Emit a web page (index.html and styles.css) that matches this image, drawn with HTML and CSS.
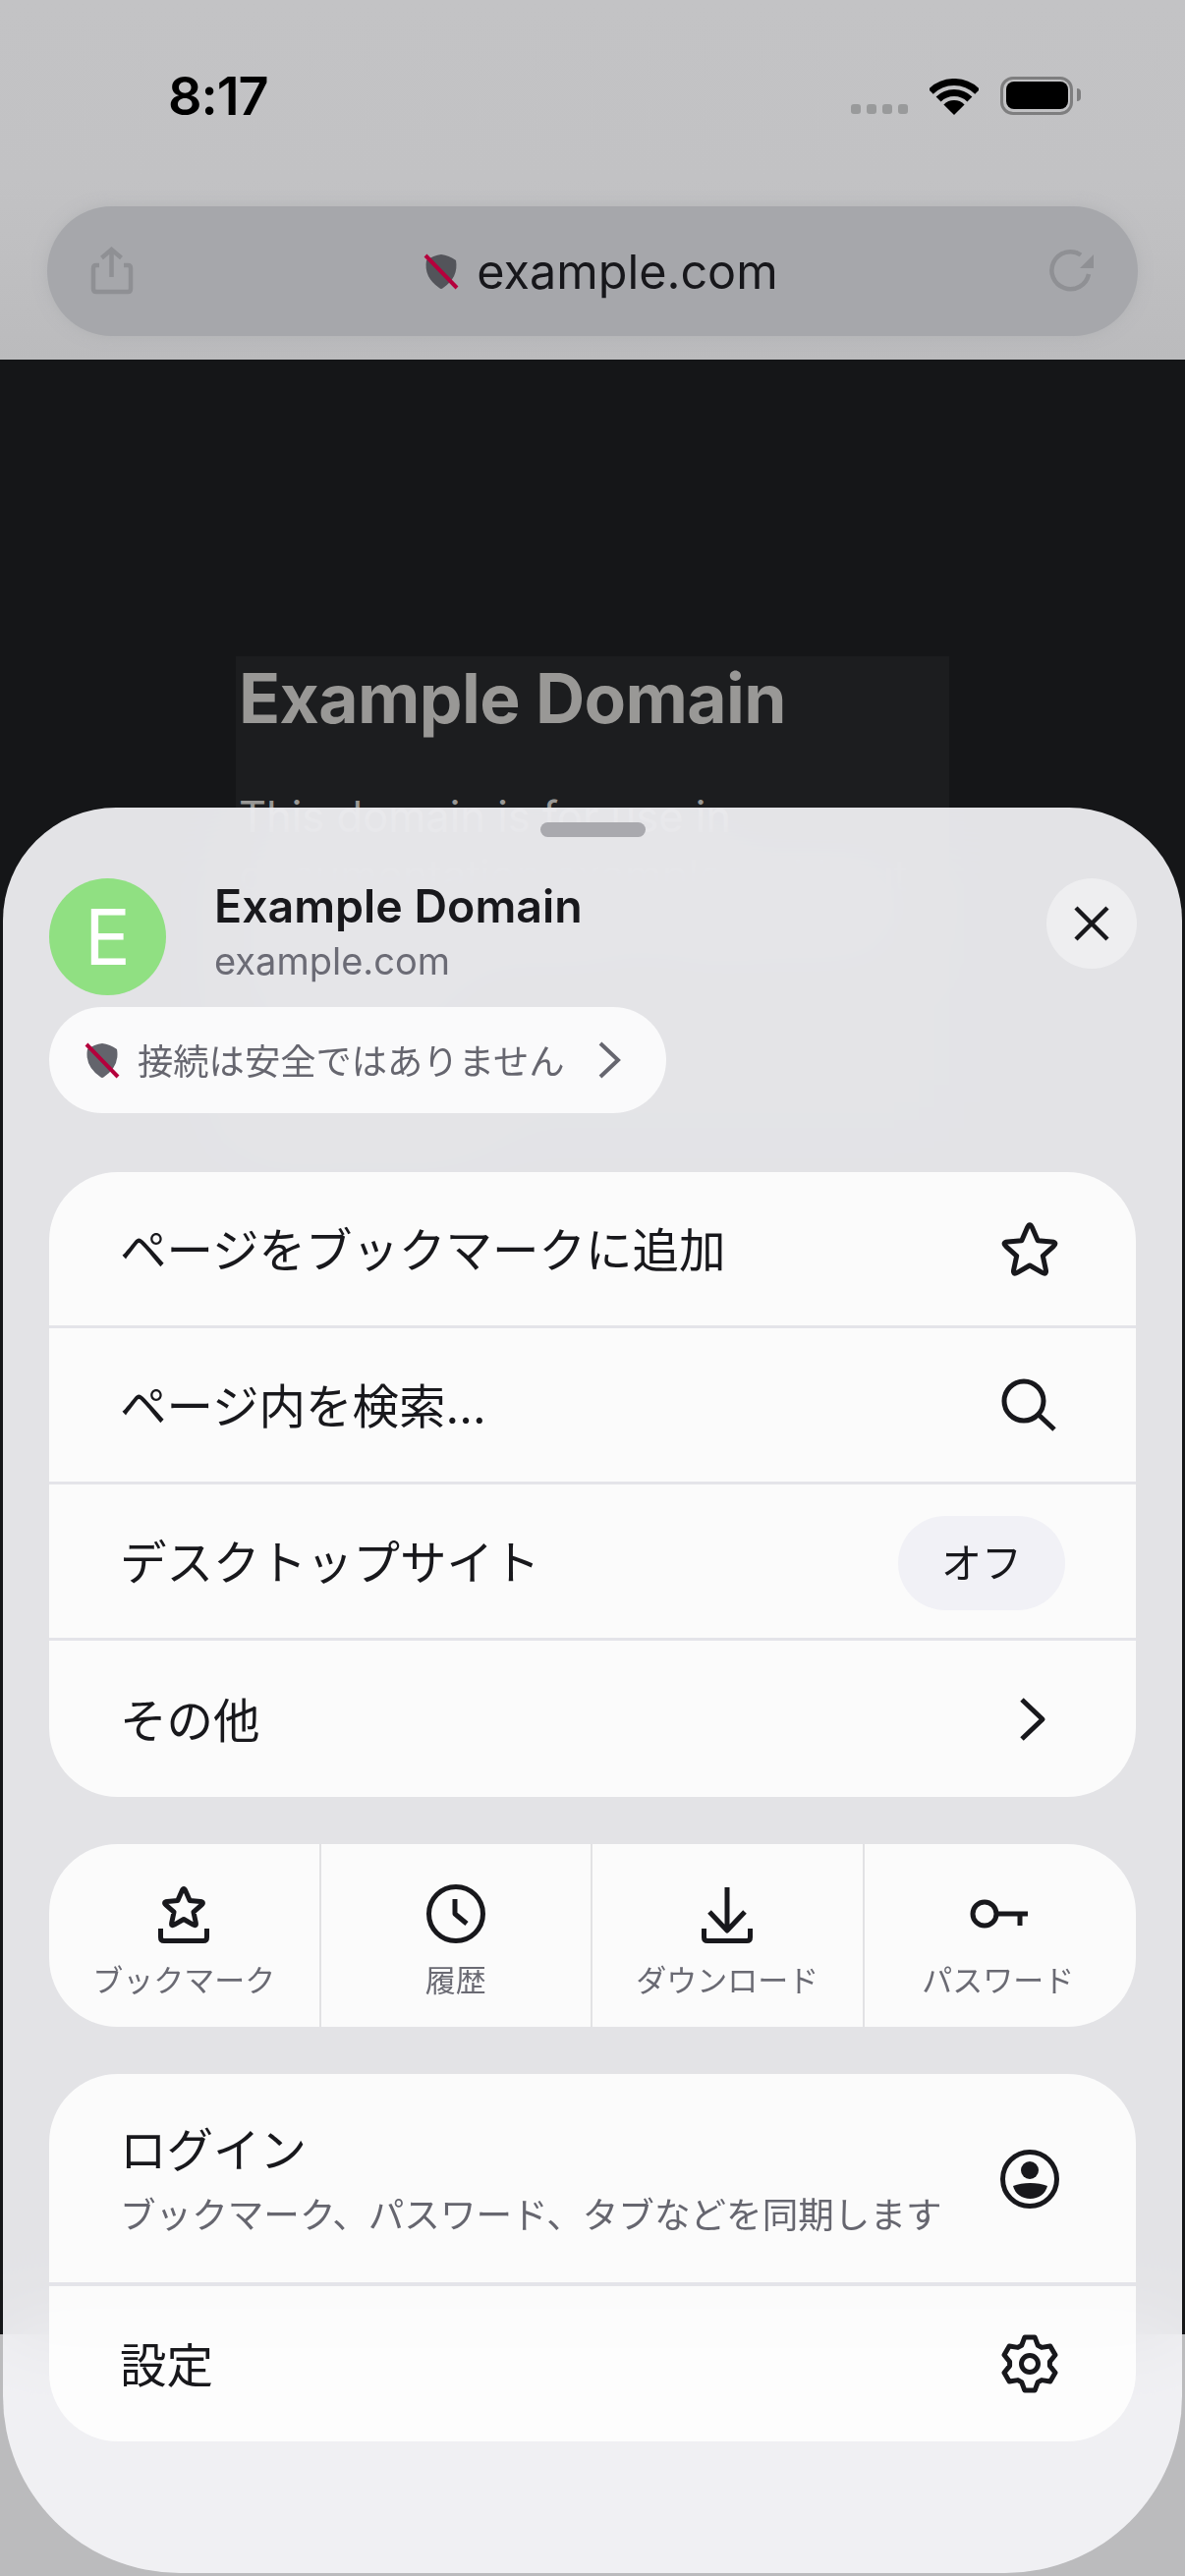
FILE: index.html
```html
<!DOCTYPE html>
<html lang="ja">
<head>
    <meta charset="UTF-8">
    <meta name="viewport" content="width=device-width, initial-scale=1.0">
    <title>Example Domain</title>
    <link rel="stylesheet" href="styles.css">
</head>
<body>
    <div class="chrome">
        <div class="status-bar">
            <span class="clock">8:17</span>
            <div class="status-icons">
                <div class="signal"><i></i><i></i><i></i><i></i></div>
                <svg class="wifi" width="50" height="37" viewBox="0 0 50 37">
                    <path d="M1.3 13.3A33.5 33.5 0 0 1 48.7 13.3" fill="none" stroke="#000" stroke-width="7"/>
                    <path d="M9.1 21.1A22.5 22.5 0 0 1 40.9 21.1" fill="none" stroke="#000" stroke-width="7"/>
                    <path d="M25 37L14.4 26.4A15 15 0 0 1 35.6 26.4Z"/>
                </svg>
                <div class="battery"><div class="battery-level"></div></div>
            </div>
        </div>
        <div class="url-bar">
            <svg class="dim-icon" width="44" height="48" viewBox="0 0 44 48">
                <path d="M9 18H6Q3 18 3 21V42Q3 45 6 45H38Q41 45 41 42V21Q41 18 38 18H34M21.5 30V3M11.5 10.5L21.5 2L31.5 10.5"/>
            </svg>
            <div class="url">
                <svg width="36" height="38" viewBox="0 0 36 38">
                    <path d="M18 2Q26 3 33 8Q36 25 20 36Q18 38 16 36Q0 25 3 8Q10 3 18 2Z" fill="#53545a"/>
                    <path d="M2 3L34 36" stroke="#b5003c" stroke-width="4"/>
                </svg>
                <span>example.com</span>
            </div>
            <svg class="dim-icon" width="44" height="44" viewBox="0 0 44 44">
                <path d="M31 5.5A19 19 0 1 0 39 25"/>
                <path d="M44 5V19H30Z" fill="#8f9094" stroke="none"/>
            </svg>
        </div>
    </div>

    <div class="page">
        <div class="page-box">
            <h1>Example Domain</h1>
            <p>This domain is for use in documentation examples without needing permission. Avoid use in operations.</p>
            <p>Learn more</p>
        </div>
    </div>

    <div class="sheet">
        <div class="handle"></div>
        <div class="site-head">
            <div class="avatar">E</div>
            <div class="site-info">
                <div class="site-title">Example Domain</div>
                <div class="site-url">example.com</div>
            </div>
            <button class="close">
                <svg class="line-icon" width="36" height="36" viewBox="0 0 36 36">
                    <path d="M2 2L34 34M34 2L2 34"/>
                </svg>
            </button>
        </div>
        <div class="secure-pill">
            <svg width="36" height="38" viewBox="0 0 36 38">
                <path d="M18 2Q26 3 33 8Q36 25 20 36Q18 38 16 36Q0 25 3 8Q10 3 18 2Z" fill="#63646c"/>
                <path d="M2 3L34 36" stroke="#b5003c" stroke-width="4"/>
            </svg>
            <span>接続は安全ではありません</span>
            <svg class="pill-chevron" width="24" height="38" viewBox="0 0 24 38">
                <path d="M3 2L21 19L3 36"/>
            </svg>
        </div>

        <div class="card">
            <div class="row">
                <span>ページをブックマークに追加</span>
                <svg class="line-icon icon-star" width="66" height="66" viewBox="-3 -3 66 66">
                    <path d="M27.5 7.6Q30 2 32.5 7.6L38.2 20.7L52.4 22.1Q58.5 22.7 53.9 26.8L43.3 36.3L46.3 50.3Q47.6 56.3 42.3 53.2L30 46L17.7 53.2Q12.4 56.3 13.7 50.3L16.7 36.3L6.1 26.8Q1.5 22.7 7.6 22.1L21.8 20.7Z"/>
                </svg>
            </div>
            <div class="row">
                <span>ページ内を検索...</span>
                <svg class="line-icon" width="60" height="60" viewBox="0 -2 60 60">
                    <circle cx="24" cy="24" r="20"/>
                    <path d="M39 38L55 53"/>
                </svg>
            </div>
            <div class="row">
                <span>デスクトップサイト</span>
                <span class="badge">オフ</span>
            </div>
            <div class="row">
                <span>その他</span>
                <svg class="line-icon" width="60" height="60" viewBox="0 0 60 60">
                    <path d="M22 10L43 30L22 50"/>
                </svg>
            </div>
        </div>

        <div class="quick-card">
            <div class="quick-item">
                <svg class="line-icon" width="60" height="60" viewBox="0 0 60 60">
                    <path transform="translate(7.5 1) scale(.75)" stroke-width="6.67" d="M27.5 7.6Q30 2 32.5 7.6L38.2 20.7L52.4 22.1Q58.5 22.7 53.9 26.8L43.3 36.3L46.3 50.3Q47.6 56.3 42.3 53.2L30 46L17.7 53.2Q12.4 56.3 13.7 50.3L16.7 36.3L6.1 26.8Q1.5 22.7 7.6 22.1L21.8 20.7Z"/>
                    <path d="M6.5 45V54Q6.5 57.5 10 57.5H50Q53.5 57.5 53.5 54V45"/>
                </svg>
                <span>ブックマーク</span>
            </div>
            <div class="quick-item">
                <svg class="line-icon" width="60" height="60" viewBox="0 0 60 60">
                    <circle cx="30" cy="30" r="27.5"/>
                    <path d="M29 15V30L41 40"/>
                </svg>
                <span>履歴</span>
            </div>
            <div class="quick-item">
                <svg class="line-icon" width="60" height="60" viewBox="0 0 60 60">
                    <path d="M30 3V47M12 28L30 47L48 28M6.5 45V54Q6.5 57.5 10 57.5H50Q53.5 57.5 53.5 54V45"/>
                </svg>
                <span>ダウンロード</span>
            </div>
            <div class="quick-item">
                <svg class="line-icon" width="60" height="60" viewBox="0 0 60 60">
                    <circle cx="16" cy="30" r="12"/>
                    <path d="M28 30H60M52 30V42"/>
                </svg>
                <span>パスワード</span>
            </div>
        </div>

        <div class="card">
            <div class="row row-login">
                <div>
                    <div>ログイン</div>
                    <div class="row-sub">ブックマーク、パスワード、タブなどを同期します</div>
                </div>
                <svg class="line-icon" width="60" height="60" viewBox="0 0 60 60">
                    <circle cx="30" cy="30" r="27.5"/>
                    <circle cx="30" cy="21" r="9" fill="#18181c" stroke="none"/>
                    <path d="M13 37C18 35 24 34 30.5 34C37 34 43 35 48 37C46 45 39 50 30.5 50C22 50 15 45 13 37Z" fill="#18181c" stroke="none"/>
                </svg>
            </div>
            <div class="row">
                <span>設定</span>
                <svg class="line-icon" width="60" height="60" viewBox="0 0 60 60">
                    <path d="M21.7 11.3L24.8 3H35.2L38.3 11.3L42.1 13.4L50.8 12L56 21L50.4 27.9V32.1L56 39L50.8 48L42.1 46.6L38.3 48.7L35.2 57H24.8L21.7 48.7L17.9 46.6L9.2 48L4 39L9.6 32.1V27.9L4 21L9.2 12L17.9 13.4Z"/>
                    <circle cx="30" cy="30" r="8.5"/>
                </svg>
            </div>
        </div>
    </div>
</body>
</html>
```

FILE: styles.css
```css
* {
    box-sizing: border-box;
}
html, body {
    margin: 0;
    height: 2622px;
}
body {
    position: relative;
    overflow: hidden;
    background: #bbbbbd;
    font-family: Inter, "Noto Sans CJK JP", sans-serif;
    color: #18181c;
}

/* browser chrome */
.chrome {
    height: 366px;
    background: linear-gradient(#c3c3c5, #c2c2c4 50%, #bbbbbd);
}
.status-bar {
    display: flex;
    align-items: center;
    justify-content: space-between;
    height: 194px;
    padding: 0 114px 0 171px;
}
.clock {
    font-size: 54px;
    font-weight: 600;
    color: #000;
    letter-spacing: -1px;
}
.status-icons {
    display: flex;
    align-items: flex-end;
    gap: 22px;
}
.signal {
    display: flex;
    gap: 6px;
    margin-bottom: 1px;
}
.signal i {
    width: 10px;
    height: 10px;
    border-radius: 3px;
    background: #999a9b;
}
.battery {
    position: relative;
    width: 74px;
    height: 39px;
    padding: 2.5px;
    border: 3.5px solid #7e7e7f;
    border-radius: 13px;
}
.battery::after {
    content: "";
    position: absolute;
    top: 9px;
    right: -11px;
    width: 4px;
    height: 13px;
    border-radius: 0 4px 4px 0;
    background: #7e7e7f;
}
.battery-level {
    height: 100%;
    border-radius: 8px;
    background: #000;
}
.url-bar {
    display: flex;
    align-items: center;
    justify-content: space-between;
    height: 132px;
    margin: 16px 48px 0;
    padding: 0 45px 0 44px;
    border-radius: 66px;
    background: #a6a7ab;
    box-shadow: 0 0 14px rgba(166, 167, 171, 0.5);
}
.dim-icon {
    overflow: visible;
    fill: none;
    stroke: #8f9094;
    stroke-width: 4.5;
}
.url {
    display: flex;
    align-items: center;
    gap: 18px;
    margin-left: 18px;
    font-size: 48.5px;
    color: #17171b;
}

/* the page behind the sheet */
.page {
    height: 2010px;
    padding: 302px 0 0 240px;
    background: #151618;
}
.page-box {
    width: 726px;
    height: 480px;
    padding: 0 3px;
    background: #1c1d1f;
    color: #999896;
}
.page-box h1 {
    margin: 0;
    padding-top: 3px;
    font-size: 69.5px;
    font-weight: 700;
    line-height: 80px;
    letter-spacing: -0.6px;
}
.page-box p {
    margin: 50px 0 0;
    font-size: 43.5px;
    line-height: 60px;
}

/* bottom sheet */
.sheet {
    position: absolute;
    top: 822px;
    left: 3px;
    right: 3px;
    bottom: 3px;
    padding: 15px 47px 0;
    border-radius: 115px 115px 180px 180px;
    background: rgba(244, 244, 247, 0.927);
    backdrop-filter: blur(40px);
}
.handle {
    width: 107px;
    height: 15px;
    margin: 0 auto;
    border-radius: 8px;
    background: #a9a9ae;
}
.site-head {
    display: flex;
    align-items: flex-start;
    margin-top: 42px;
}
.avatar {
    display: flex;
    align-items: center;
    justify-content: center;
    width: 119px;
    height: 119px;
    border-radius: 50%;
    background: #90e082;
    color: #fff;
    font-size: 78px;
}
.site-info {
    flex: 1;
    margin: -2px 0 0 49px;
}
.site-title {
    font-size: 46.5px;
    font-weight: 600;
    line-height: 60px;
}
.site-url {
    margin-top: 1px;
    font-size: 38px;
    line-height: 50px;
    color: #6b6b75;
}
.close {
    display: flex;
    align-items: center;
    justify-content: center;
    width: 92px;
    height: 92px;
    margin-right: -1px;
    padding: 0;
    border: none;
    border-radius: 50%;
    background: #eeeef0;
}
.line-icon {
    flex: none;
    overflow: visible;
    fill: none;
    stroke: #18181c;
    stroke-width: 5;
    stroke-linejoin: round;
}
.close .line-icon {
    stroke-width: 4.5;
}
.icon-star {
    margin: 2px -3px 0;
}
.secure-pill {
    display: inline-flex;
    align-items: center;
    height: 108px;
    margin-top: 12px;
    padding: 0 46px 0 36px;
    border-radius: 54px;
    background: #fafafb;
    color: #66666f;
    font-size: 36.3px;
}
.secure-pill span {
    margin: -2px 34px 0 18px;
}
.pill-chevron {
    fill: none;
    stroke: #66666f;
    stroke-width: 4;
}
.card {
    margin-top: 48px;
    border-radius: 70px;
    background: rgba(255, 255, 255, 0.85);
}
.secure-pill + .card {
    margin-top: 60px;
}
.row {
    display: flex;
    align-items: center;
    justify-content: space-between;
    height: 159px;
    padding: 0 78px 0 72px;
    border-top: 3px solid #e4e4e9;
    font-size: 47.5px;
}
.row > span:first-child {
    margin-top: -3px;
}
.row:first-child {
    height: 156px;
    border-top: none;
}
.row:last-child {
    height: 162px;
}
.row-login {
    height: 212px !important;
    align-items: flex-start;
    padding-top: 40px;
}
.row-login > .line-icon {
    margin-top: 37px;
}
.row-login + .row {
    border-top-width: 4px;
}
.row-sub {
    margin-top: 6px;
    font-size: 36.6px;
    color: #66666f;
}
.badge {
    margin: 4px -6px 0 0;
    padding: 0 44px;
    height: 96px;
    line-height: 96px;
    border-radius: 48px;
    background: #f1f1f6;
    font-size: 41px;
}
.quick-card {
    display: grid;
    grid-template-columns: repeat(4, 1fr);
    height: 186px;
    margin-top: 48px;
    border-radius: 70px;
    background: rgba(255, 255, 255, 0.85);
}
.quick-item {
    display: flex;
    flex-direction: column;
    align-items: center;
    padding-top: 41px;
    border-right: 2px solid #e2e2e4;
    color: #6a6a73;
    font-size: 31px;
}
.quick-item:last-child {
    border-right: none;
    padding-right: 4px;
}
.quick-item span {
    margin-top: 16px;
    line-height: 44px;
}
```
